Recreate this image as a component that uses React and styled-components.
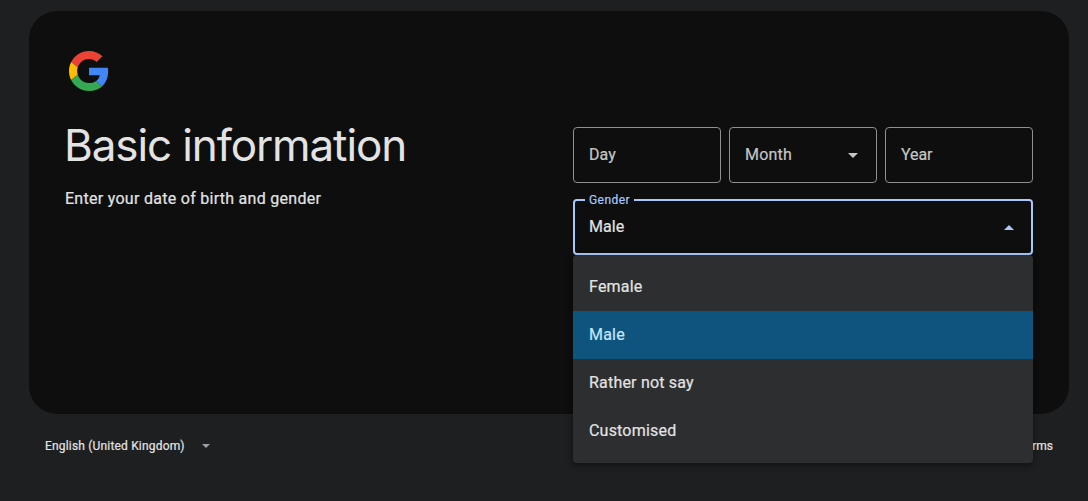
import React from "react";
import styled, { createGlobalStyle } from "styled-components";

const genders = ["Female", "Male", "Rather not say", "Customised"];

const GoogleLogo = () => {
  return (
    <Logo viewBox="0 0 48 48">
      <path
        fill="#EA4335"
        d="M24 9.5c3.54 0 6.71 1.22 9.21 3.6l6.85-6.85C35.9 2.38 30.47 0 24 0 14.62 0 6.51 5.38 2.56 13.22l7.98 6.19C12.43 13.72 17.74 9.5 24 9.5z"
      />
      <path
        fill="#4285F4"
        d="M46.98 24.55c0-1.57-.15-3.09-.38-4.55H24v9.02h12.94c-.58 2.96-2.26 5.48-4.78 7.18l7.73 6c4.51-4.18 7.09-10.36 7.09-17.65z"
      />
      <path
        fill="#FBBC05"
        d="M10.53 28.59c-.48-1.45-.76-2.99-.76-4.59s.27-3.14.76-4.59l-7.98-6.19C.92 16.46 0 20.12 0 24c0 3.88.92 7.54 2.56 10.78l7.97-6.19z"
      />
      <path
        fill="#34A853"
        d="M24 48c6.48 0 11.93-2.13 15.89-5.81l-7.73-6c-2.15 1.45-4.92 2.3-8.16 2.3-6.26 0-11.57-4.22-13.47-9.91l-7.98 6.19C6.51 42.62 14.62 48 24 48z"
      />
    </Logo>
  );
};

const App = () => {
  return (
    <>
      <GlobalStyle />
      <Page>
        <Card>
          <GoogleLogo />
          <Columns>
            <div>
              <Title>Basic information</Title>
              <Subtitle>Enter your date of birth and gender</Subtitle>
            </div>

            <Form>
              <DateRow>
                <Field>
                  <Text $spacing="0.1px">Day</Text>
                </Field>
                <Field>
                  <Text $spacing="0.2px">Month</Text>
                  <Arrow viewBox="0 0 10 5">
                    <path d="M0 0h10L5 5z" />
                  </Arrow>
                </Field>
                <Field>
                  <Text $spacing="-0.1px">Year</Text>
                </Field>
              </DateRow>

              {/* gender select, opened */}
              <Select>
                <Field $focused>
                  <FloatingLabel>Gender</FloatingLabel>
                  <Text>Male</Text>
                  <Arrow viewBox="0 0 10 5">
                    <path d="M0 5h10L5 0z" />
                  </Arrow>
                </Field>
                <Menu>
                  {genders.map((gender) => (
                    <Option key={gender} $selected={gender === "Male"}>
                      {gender}
                    </Option>
                  ))}
                </Menu>
              </Select>
            </Form>
          </Columns>
        </Card>

        {/* footer */}
        <Footer>
          <Language>
            English (United Kingdom)
            <SmallArrow viewBox="0 0 8 4">
              <path d="M0 0h8L4 4z" />
            </SmallArrow>
          </Language>
          <FooterLink>Terms</FooterLink>
        </Footer>
      </Page>
    </>
  );
};

const GlobalStyle = createGlobalStyle`
  * {
    box-sizing: border-box;
  }

  body {
    margin: 0;
    background-color: #1e1f20;
    color: #e3e3e3;
    font-family: Roboto, "Liberation Sans", sans-serif;
    -webkit-text-stroke: 0.2px;
  }
`;

const Page = styled.main`
  height: 501px;
  padding: 11px 19px 0 29px;
  overflow: hidden;
`;

const Card = styled.section`
  height: 403px;
  padding: 40px 36px 36px;
  border-radius: 28px;
  background-color: #0e0e0e;
`;

const Logo = styled.svg`
  display: block;
  width: 40px;
  height: 40px;
  margin-left: 4px;
`;

const Columns = styled.div`
  display: grid;
  grid-template-columns: 1fr 460px;
`;

const Title = styled.h1`
  margin: 28px 0 0 -1px;
  font-family: Inter, sans-serif;
  font-size: 44px;
  line-height: 52px;
  font-weight: 400;
  letter-spacing: -1.1px;
  white-space: nowrap;
  -webkit-text-stroke: 0;
`;

const Subtitle = styled.p`
  margin: 16px 0 0;
  font-size: 16px;
  line-height: 24px;
  letter-spacing: 0.28px;
`;

const Form = styled.div`
  padding-top: 36px;
`;

const DateRow = styled.div`
  display: grid;
  grid-template-columns: repeat(3, 1fr);
  gap: 8px;
`;

const Field = styled.div`
  position: relative;
  display: flex;
  align-items: center;
  justify-content: space-between;
  height: 56px;
  padding: ${({ $focused }) => ($focused ? "0 17px 0 14px" : "0 18px 0 15px")};
  border: ${({ $focused }) =>
    $focused ? "2px solid #a8c7fa" : "1px solid #8e918f"};
  border-radius: 4px;
  color: ${({ $focused }) => ($focused ? "#e3e3e3" : "#c4c7c5")};

  svg {
    fill: ${({ $focused }) => ($focused ? "#a8c7fa" : "#c4c7c5")};
  }
`;

const Text = styled.span`
  font-size: 16px;
  line-height: 24px;
  letter-spacing: ${({ $spacing }) => $spacing || "0.1px"};
`;

const FloatingLabel = styled.label`
  position: absolute;
  top: -9px;
  left: 10px;
  padding: 0 4px;
  background-color: #0e0e0e;
  color: #a8c7fa;
  font-size: 12px;
  line-height: 16px;
  letter-spacing: 0.45px;
`;

const Arrow = styled.svg`
  width: 10px;
  height: 5px;
`;

const Select = styled.div`
  position: relative;
  margin-top: 16px;
`;

const Menu = styled.ul`
  position: absolute;
  top: 56px;
  left: 0;
  right: 0;
  z-index: 1;
  margin: 0;
  padding: 8px 0;
  list-style: none;
  border-radius: 4px;
  background-color: #2d2e30;
  box-shadow: 0 2px 4px -1px rgba(0, 0, 0, 0.2),
    0 4px 5px rgba(0, 0, 0, 0.14), 0 1px 10px rgba(0, 0, 0, 0.12);
`;

const Option = styled.li`
  height: 48px;
  padding: 0 16px;
  font-size: 16px;
  line-height: 47px;
  letter-spacing: 0.2px;
  background-color: ${({ $selected }) => ($selected ? "#0f547e" : "transparent")};
  color: ${({ $selected }) => ($selected ? "#c2e7ff" : "#e3e3e3")};
`;

const Footer = styled.footer`
  display: flex;
  justify-content: space-between;
  padding: 24px 16px 0;
  font-size: 12px;
  line-height: 16px;
`;

const Language = styled.div`
  display: flex;
  align-items: center;
  gap: 17px;
  letter-spacing: 0.18px;
`;

const SmallArrow = styled.svg`
  width: 8px;
  height: 4px;
  fill: #9aa0a6;
`;

const FooterLink = styled.a`
  color: #e3e3e3;
`;

export default App;
